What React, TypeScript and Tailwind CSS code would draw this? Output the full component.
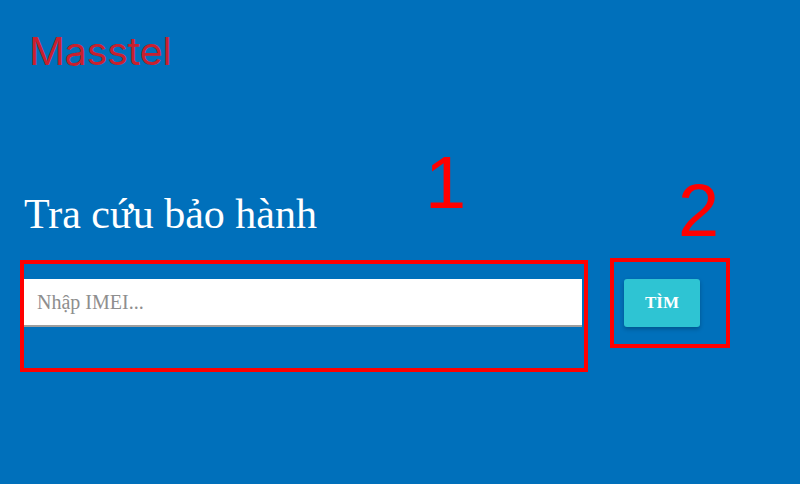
export default function App() {
  return (
    <div className="relative h-[484px] w-[800px] overflow-hidden bg-[#0070bb] font-['Liberation_Serif',serif]">
      <div className="pl-[29px] pt-[31px]">
        <div className="h-[40px] origin-left scale-x-[1.05] font-['Inter',sans-serif] text-[38px] leading-[40px] font-normal tracking-[-0.5px] text-[#c8202f]">
          Masstel
        </div>
      </div>
      <h1 className="ml-[24px] mt-[120px] h-[46px] text-[42px] leading-[46px] font-normal text-white">
        Tra cứu bảo hành
      </h1>
      <div className="ml-[20px] mt-[21px] flex items-start">
        <div className="mt-[2px] h-[112px] w-[568px] border-4 border-[#ff0000] pt-[15px]">
          <div className="flex h-[48px] w-[558px] items-center border-b-2 border-[#9e9e9e] bg-white pl-[13px] text-[20px] text-[#8e8e8e]">
            Nhập IMEI...
          </div>
        </div>
        <div className="ml-[22px] flex h-[90px] w-[120px] items-center border-4 border-[#ff0000] pl-[10px]">
          <button className="flex h-[48px] w-[76px] items-center justify-center rounded-[3px] bg-[#2ec4d3] pb-[1px] text-[17px] font-bold text-white shadow-[0_2px_4px_rgba(0,0,0,0.25)]">
            TÌM
          </button>
        </div>
      </div>
      <span className="absolute left-[425px] top-[140px] font-['Liberation_Sans',sans-serif] text-[74px] leading-[86px] text-[#ff0000]">
        1
      </span>
      <span className="absolute left-[678px] top-[168px] font-['Liberation_Sans',sans-serif] text-[74px] leading-[86px] text-[#ff0000]">
        2
      </span>
    </div>
  );
}
